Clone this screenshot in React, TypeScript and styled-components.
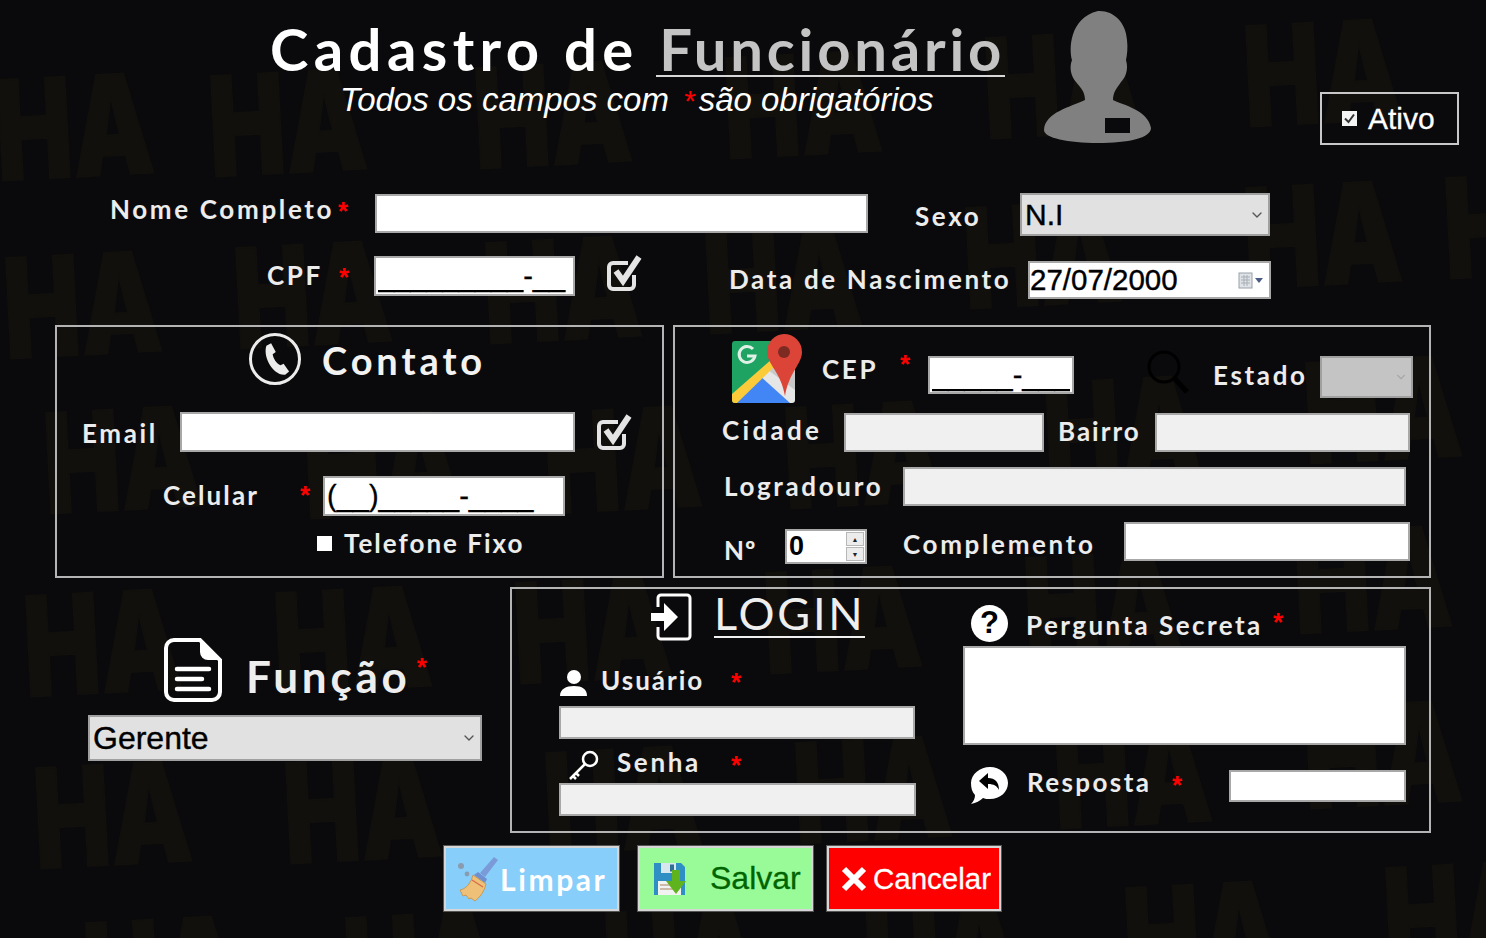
import * as React from "react";
import styled, { createGlobalStyle } from "styled-components";
import { ChevronDown } from "lucide-react";

const GlobalStyle = createGlobalStyle`
  html, body {
    margin: 0;
    padding: 0;
    background: #0a0a0c;
  }
`;

const Page = styled.div`
  position: relative;
  width: 1486px;
  height: 938px;
  overflow: hidden;
  background: #0a0a0c;
  color: #f0f0f0;
  font-family: "Lato", "Liberation Sans", sans-serif;
`;

const Watermark = styled.div`
  position: absolute;
  inset: 0;
  overflow: hidden;
`;

const WatermarkText = styled.span`
  position: absolute;
  font-family: "Inter", "Liberation Sans", sans-serif;
  font-weight: 900;
  font-size: 138px;
  line-height: 1;
  color: #12100d;
  -webkit-text-stroke: 2px #12100d;
  transform-origin: left top;
`;

const Content = styled.div`
  position: relative;
`;

const Header = styled.div`
  display: flex;
  height: 193px;
`;

const TitleBlock = styled.div`
  width: 735px;
  margin-left: 270px;
  padding-top: 14px;
`;

const Title = styled.div`
  font-size: 58px;
  line-height: 70px;
  font-weight: 700;
  letter-spacing: 5.4px;
  white-space: nowrap;
  color: #ffffff;
`;

const TitleAccent = styled.span`
  display: inline-block;
  height: 61px;
  margin-left: -2px;
  padding-left: 3px;
  letter-spacing: 3.8px;
  color: #c4c4c4;
  border-bottom: 2px solid #d8d8d8;
`;

const Subtitle = styled.div`
  margin-left: 70px;
  font-family: "Liberation Sans", sans-serif;
  font-style: italic;
  font-size: 33px;
  line-height: 32px;
  white-space: nowrap;
  color: #ffffff;
`;

const SubtitleStar = styled.span`
  color: #ff0000;
  font-size: 30px;
  margin: 0 4px 0 14px;
`;

const PersonIcon = styled.svg`
  width: 109px;
  height: 133px;
  margin: 10px 0 0 38px;
`;

const AtivoBox = styled.div`
  box-sizing: border-box;
  width: 139px;
  height: 53px;
  margin: 92px 0 0 168px;
  border: 2px solid #c8c8c8;
  display: flex;
  align-items: center;
  padding-left: 20px;
  font-family: "Liberation Sans", sans-serif;
  font-size: 30px;
  -webkit-text-stroke: 0.3px #ffffff;
  color: #ffffff;
`;

const TickBox = styled.span`
  box-sizing: border-box;
  width: 15px;
  height: 15px;
  margin-right: 11px;
  background: #f4f4f4;
  display: flex;
  align-items: center;
  justify-content: center;
`;

const Row = styled.div<{ $h: number; $pl?: number; $mt?: number; $top?: boolean }>`
  display: flex;
  align-items: ${p => (p.$top ? "flex-start" : "center")};
  height: ${p => p.$h}px;
  padding-left: ${p => p.$pl || 0}px;
  margin-top: ${p => p.$mt || 0}px;
`;

const Label = styled.span<{ $w?: number; $ml?: number; $ls?: number; $mt?: number }>`
  flex: none;
  width: ${p => (p.$w ? p.$w + "px" : "auto")};
  margin-left: ${p => p.$ml || 0}px;
  margin-top: ${p => p.$mt || 0}px;
  font-size: 26px;
  line-height: 1.2;
  font-weight: 700;
  letter-spacing: ${p => (p.$ls === undefined ? 2.65 : p.$ls)}px;
  white-space: nowrap;
  color: #ececec;
`;

const Star = styled.span<{ $w?: number; $mt?: number; $ml?: number }>`
  flex: none;
  width: ${p => (p.$w ? p.$w + "px" : "auto")};
  margin-top: ${p => (p.$mt === undefined ? -2 : p.$mt)}px;
  margin-left: ${p => p.$ml || 0}px;
  font-family: "Liberation Sans", sans-serif;
  font-size: 26px;
  font-weight: 700;
  line-height: 20px;
  height: 20px;
  color: #ff0000;
`;

const Field = styled.input<{ $w: number; $h: number; $off?: boolean; $mt?: number }>`
  flex: none;
  display: block;
  box-sizing: border-box;
  width: ${p => p.$w}px;
  height: ${p => p.$h}px;
  margin: ${p => p.$mt || 0}px 0 0 0;
  padding: 0 2px;
  border: 2px solid #a8a8a8;
  border-radius: 0;
  outline: none;
  background: ${p => (p.$off ? "#f0f0f0" : "#ffffff")};
  font-family: "Liberation Sans", sans-serif;
  font-size: 29px;
  -webkit-text-stroke: 0.3px #000000;
  color: #000000;
`;

const Memo = styled.div`
  box-sizing: border-box;
  width: 443px;
  height: 99px;
  margin-top: 5px;
  background: #ffffff;
  border: 2px solid #a8a8a8;
`;

const SelectBox = styled.div<{ $w: number; $h: number; $bg?: string; $size?: number; $mt?: number }>`
  flex: none;
  box-sizing: border-box;
  width: ${p => p.$w}px;
  height: ${p => p.$h}px;
  margin-top: ${p => p.$mt || 0}px;
  display: flex;
  align-items: center;
  justify-content: space-between;
  padding: 0 3px 0 3px;
  border: 2px solid #a0a0a0;
  background: ${p => p.$bg || "#e1e1e1"};
  font-family: "Liberation Sans", sans-serif;
  font-size: ${p => p.$size || 30}px;
  -webkit-text-stroke: 0.4px #000000;
  color: #000000;
`;

const DateBox = styled.div`
  flex: none;
  box-sizing: border-box;
  width: 243px;
  height: 38px;
  margin-top: 7px;
  display: flex;
  align-items: center;
  justify-content: space-between;
  padding: 0 5px 0 0;
  border: 2px solid #a8a8a8;
  background: #ffffff;
  font-family: "Liberation Sans", sans-serif;
  font-size: 29.5px;
  -webkit-text-stroke: 0.4px #000000;
  color: #000000;
`;

const Spin = styled.div`
  flex: none;
  box-sizing: border-box;
  width: 82px;
  height: 35px;
  margin-top: 7px;
  display: flex;
  align-items: center;
  justify-content: space-between;
  padding: 0 1px 0 2px;
  border: 2px solid #a8a8a8;
  background: #ffffff;
  font-family: "Liberation Sans", sans-serif;
  font-weight: 700;
  font-size: 27px;
  color: #000000;
`;

const SpinButtons = styled.div`
  width: 18px;
  display: flex;
  flex-direction: column;
  gap: 1px;
`;

const SpinButton = styled.div`
  height: 14px;
  display: flex;
  align-items: center;
  justify-content: center;
  background: #ececec;
  border: 1px solid #b8b8b8;
  box-sizing: border-box;
  font-size: 7px;
  line-height: 1;
  color: #222222;
`;

const Columns = styled.div`
  display: flex;
  gap: 9px;
  padding: 25px 0 0 55px;
`;

const Panel = styled.div<{ $w: number; $h: number }>`
  box-sizing: border-box;
  width: ${p => p.$w}px;
  height: ${p => p.$h}px;
  border: 2px solid #b4b4b4;
`;

const SectionTitle = styled.span`
  margin: 2px 0 0 21px;
  font-size: 38px;
  font-weight: 700;
  letter-spacing: 3.9px;
  color: #f2f2f2;
`;

const PhoneRing = styled.span`
  box-sizing: border-box;
  width: 52px;
  height: 52px;
  border: 3px solid #ececec;
  border-radius: 50%;
  display: flex;
  align-items: center;
  justify-content: center;
`;

const Square = styled.span`
  width: 15px;
  height: 15px;
  margin-right: 12px;
  background: #ffffff;
`;

const IconSvg = styled.svg<{ $w: number; $h: number; $ml?: number; $mt?: number }>`
  flex: none;
  display: block;
  width: ${p => p.$w}px;
  height: ${p => p.$h}px;
  margin-left: ${p => p.$ml || 0}px;
  margin-top: ${p => p.$mt || 0}px;
`;

const BottomRow = styled.div`
  display: flex;
  padding: 9px 0 0 88px;
`;

const FuncaoColumn = styled.div`
  width: 394px;
  margin-right: 28px;
  padding-top: 51px;
`;

const FuncaoTitle = styled.span`
  margin: 12px 0 0 24px;
  font-size: 44px;
  font-weight: 700;
  letter-spacing: 3.8px;
  color: #eeeeee;
`;

const LoginGrid = styled.div`
  display: grid;
  grid-template-columns: 451px 1fr;
`;

const LoginColumn = styled.div`
  padding-left: 47px;
`;

const LoginTitle = styled.span`
  margin: -6px 0 0 22px;
  height: 45px;
  font-size: 45px;
  line-height: 44px;
  letter-spacing: 2.8px;
  color: #eeeeee;
  border-bottom: 2px solid #f0f0f0;
`;

const QuestionMark = styled.span`
  flex: none;
  width: 37px;
  height: 37px;
  border-radius: 50%;
  background: #ffffff;
  display: flex;
  align-items: center;
  justify-content: center;
  font-family: "Liberation Sans", sans-serif;
  font-size: 31px;
  font-weight: 700;
  color: #000000;
`;

const ButtonRow = styled.div`
  display: flex;
  padding: 12px 0 0 443px;
`;

const Button = styled.div<{ $bg: string; $fg: string; $ml?: number; $w: number }>`
  box-sizing: border-box;
  width: ${p => p.$w}px;
  height: 67px;
  margin-left: ${p => p.$ml || 0}px;
  display: flex;
  align-items: center;
  border: 3px solid #d6d6d6;
  outline: 1px solid #555555;
  outline-offset: -1px;
  background: ${p => p.$bg};
  color: ${p => p.$fg};
  font-family: "Liberation Sans", sans-serif;
  white-space: nowrap;
`;

const ButtonText = styled.span<{ $ml?: number; $size?: number; $lato?: boolean }>`
  margin-left: ${p => p.$ml || 0}px;
  font-size: ${p => p.$size || 30}px;
  -webkit-text-stroke: 0.3px currentColor;
  ${p => p.$lato && `font-family: "Lato", sans-serif; font-weight: 700; letter-spacing: 2.6px; -webkit-text-stroke: 0;`}
`;

const watermarks = [
  [-8, 62], [205, 58], [470, 50], [720, 40], [980, 20], [1240, 8],
  [0, 240], [230, 230], [480, 225], [700, 215], [960, 190], [1240, 170], [1440, 160],
  [40, 395], [300, 400], [540, 395], [780, 390], [1040, 365], [1300, 345],
  [20, 578], [270, 575], [510, 565], [760, 555], [1020, 540], [1290, 515],
  [30, 750], [280, 745], [540, 735], [790, 725], [1050, 710], [1300, 690],
  [80, 905], [340, 900], [600, 895], [860, 885], [1120, 870], [1380, 850],
];

const CheckIcon = ({ ml }: { ml?: number }) => (
  <IconSvg $w={36} $h={38} $ml={ml} viewBox="0 0 36 38" fill="none">
    <path d="M27 21v10a4 4 0 0 1-4 4H6a4 4 0 0 1-4-4V13a4 4 0 0 1 4-4h15" stroke="#e4e4e4" strokeWidth="4" />
    <path d="M9 17l7 10L32 3" stroke="#e4e4e4" strokeWidth="6" />
  </IconSvg>
);

const MapsLogo = () => (
  <IconSvg $w={71} $h={69} viewBox="0 0 71 69">
    <path d="M3 7h55v62H3a3 3 0 0 1-3-3V10a3 3 0 0 1 3-3z" fill="#1ea362" />
    <path d="M40 32L63 52v14a3 3 0 0 1-3 3h-5L26 45z" fill="#e6e6e6" />
    <path d="M42 20h21v36L36 36z" fill="#c8c8c8" />
    <path d="M28 42L58 69H5z" fill="#4285f4" />
    <path d="M0 60L40 25l5 5L5 69H3a3 3 0 0 1-3-3z" fill="#fbcb3a" />
    <path d="M52 0a18 18 0 0 1 18 18c0 12-13 20-17 44C49 38 35 30 35 18A18 18 0 0 1 52 0z" fill="#db4437" />
    <circle cx="52" cy="18" r="6" fill="#7d2a22" />
    <path d="M21 15a8 8 0 1 0 2 7h-8" fill="none" stroke="#dff0e6" strokeWidth="3" />
  </IconSvg>
);

const DateIcon = () => (
  <svg width="26" height="18" viewBox="0 0 26 18">
    <rect x="1" y="2" width="13" height="15" fill="#dfe3e8" stroke="#9aa0a8" />
    <path d="M3 6h9M3 9h9M3 12h9M6 4v11M9 4v11" stroke="#a8adb5" strokeWidth="1" />
    <path d="M17 7h8l-4 5z" fill="#4b5b84" />
  </svg>
);

const Broom = () => (
  <IconSvg $w={44} $h={46} $ml={12} viewBox="0 0 44 46">
    <circle cx="3" cy="10" r="3" fill="#8a9bb0" />
    <circle cx="9" cy="18" r="2.4" fill="#8a9bb0" />
    <path d="M36 1l4 3-13 17-5-4z" fill="#7b9bd8" />
    <path d="M20 16l9 7-2 4-11-8z" fill="#6f8fd0" />
    <path d="M15 19l13 9c-2 8-6 13-11 17l-4-3-2 1-3-4-3 1-3-6c6-1 11-7 13-15z" fill="#eec078" stroke="#c99a55" strokeWidth="1" />
    <path d="M14 24l11 7" stroke="#d96a4a" strokeWidth="1.2" />
  </IconSvg>
);

const Floppy = () => (
  <IconSvg $w={33} $h={34} $ml={13} viewBox="0 0 33 34">
    <path d="M1 1h27l4 4v28H1z" fill="#2f8ec4" />
    <rect x="8" y="1" width="15" height="10" fill="#d8e6ee" />
    <rect x="17" y="2.5" width="4" height="7" fill="#2f6f96" />
    <rect x="5" y="19" width="23" height="14" fill="#f2f2f2" />
    <path d="M7 23h14M7 27h14" stroke="#c0a890" strokeWidth="1.5" />
    <path d="M19 8h8v11h6L23 32 13 19h6z" fill="#5fb41e" />
  </IconSvg>
);

export default function App() {
  return (
    <Page>
      <GlobalStyle />
      <Watermark>
        {watermarks.map(([x, y], i) => (
          <WatermarkText key={i} style={{ left: x, top: y, transform: "rotate(-3deg) scaleX(0.74)" }}>HA</WatermarkText>
        ))}
      </Watermark>

      <Content>
        <Header>
          <TitleBlock>
            <Title>Cadastro de <TitleAccent>Funcionário</TitleAccent></Title>
            <Subtitle>Todos os campos com<SubtitleStar>*</SubtitleStar>são obrigatórios</Subtitle>
          </TitleBlock>
          <PersonIcon viewBox="0 0 109 133">
            <path d="M55 1C70 0 83 12 84 30c1 8 0 15-1 20 3 10-1 18-5 22-4 6-8 10-8 18 10 5 35 10 38 28 0 10-23 15-53 15S1 128 1 120c1-18 27-23 41-30 0-8-4-12-9-18-5-6-7-14-4-22-3-10-3-42 26-49z" fill="#808080" />
            <rect x="62" y="108" width="25" height="15" fill="#0a0a0c" />
          </PersonIcon>
          <AtivoBox>
            <TickBox>
              <svg width="13" height="13" viewBox="0 0 13 13" fill="none">
                <path d="M2 6.5l3.5 3.5L11 2.5" stroke="#333333" strokeWidth="2" />
              </svg>
            </TickBox>
            Ativo
          </AtivoBox>
        </Header>

        <Row $h={43} $pl={110} $top>
          <Label $w={228} $mt={1}>Nome Completo</Label>
          <Star $w={37} $mt={8}>*</Star>
          <Field $w={493} $h={39} $mt={1} readOnly />
          <Label $w={105} $ml={47} $mt={8}>Sexo</Label>
          <SelectBox $w={250} $h={43} $size={30}>
            N.I
            <ChevronDown size={16} color="#555555" />
          </SelectBox>
        </Row>

        <Row $h={46} $pl={267} $mt={18} $top>
          <Label $w={72} $mt={6}>CPF</Label>
          <Star $w={35} $mt={13}>*</Star>
          <Field $w={201} $h={40} $mt={2} value="_________-__" readOnly />
          <CheckIcon ml={32} />
          <Label $w={299} $ml={86} $mt={10}>Data de Nascimento</Label>
          <DateBox>
            27/07/2000
            <DateIcon />
          </DateBox>
        </Row>

        <Columns>
          <Panel $w={609} $h={253}>
            <Row $h={52} $pl={192} $mt={6}>
              <PhoneRing>
                <svg width="36" height="38" viewBox="0 0 46 46">
                  <path d="M12 6l6-3 6 11-4 3c1 6 5 12 10 14l4-2 7 10-5 4c-8 1-16-6-21-15C11 20 10 12 12 6z" fill="#ececec" />
                </svg>
              </PhoneRing>
              <SectionTitle>Contato</SectionTitle>
            </Row>
            <Row $h={40} $pl={25} $mt={27}>
              <Label $w={98} $mt={4}>Email</Label>
              <Field $w={395} $h={40} readOnly />
              <CheckIcon ml={22} />
            </Row>
            <Row $h={40} $pl={106} $mt={24}>
              <Label $w={137} $ls={2.1}>Celular</Label>
              <Star $w={23}>*</Star>
              <Field $w={242} $h={40} value="(__)_____-____" readOnly />
            </Row>
            <Row $h={27} $pl={260} $mt={14}>
              <Square />
              <Label $ls={2}>Telefone Fixo</Label>
            </Row>
          </Panel>

          <Panel $w={758} $h={253}>
            <Row $h={69} $pl={57} $mt={7} $top>
              <MapsLogo />
              <Label $w={78} $ml={19} $mt={20}>CEP</Label>
              <Star $w={28} $mt={20}>*</Star>
              <Field $w={146} $h={38} $mt={22} value="_____-___" readOnly />
              <IconSvg $w={43} $h={45} $ml={73} $mt={16} viewBox="0 0 43 45" fill="none">
                <circle cx="17" cy="17" r="15" stroke="#000000" strokeWidth="3" />
                <path d="M28 29l12 13" stroke="#000000" strokeWidth="5" />
              </IconSvg>
              <Label $w={107} $ml={23} $mt={26}>Estado</Label>
              <SelectBox $w={93} $h={42} $mt={22} $bg="#c4c4c4">
                <span />
                <ChevronDown size={14} color="#a8a8a8" />
              </SelectBox>
            </Row>
            <Row $h={39} $pl={47} $mt={10}>
              <Label $w={122} $ls={3.3} $mt={-4}>Cidade</Label>
              <Field $w={200} $h={39} $off readOnly />
              <Label $w={97} $ml={14} $ls={2} $mt={-2}>Bairro</Label>
              <Field $w={255} $h={39} $off readOnly />
            </Row>
            <Row $h={39} $pl={49} $mt={15}>
              <Label $w={179}>Logradouro</Label>
              <Field $w={503} $h={39} $off readOnly />
            </Row>
            <Row $h={42} $pl={49} $mt={16} $top>
              <Label $w={61} $ls={1} $mt={13}>Nº</Label>
              <Spin>
                0
                <SpinButtons>
                  <SpinButton>▲</SpinButton>
                  <SpinButton>▼</SpinButton>
                </SpinButtons>
              </Spin>
              <Label $w={221} $ml={36} $mt={7}>Complemento</Label>
              <Field $w={286} $h={39} readOnly />
            </Row>
          </Panel>
        </Columns>

        <BottomRow>
          <FuncaoColumn>
            <Row $h={64} $pl={76}>
              <IconSvg $w={58} $h={64} viewBox="0 0 58 64" fill="none">
                <path d="M10 2h26l20 20v32a8 8 0 0 1-8 8H10a8 8 0 0 1-8-8V10a8 8 0 0 1 8-8z" stroke="#ffffff" strokeWidth="4" />
                <path d="M36 2v12a8 8 0 0 0 8 8h12z" fill="#ffffff" />
                <path d="M13 31h32M13 41h25M13 51h32" stroke="#ffffff" strokeWidth="4.5" strokeLinecap="round" />
              </IconSvg>
              <FuncaoTitle>Função</FuncaoTitle>
              <Star $mt={-6} $ml={6}>*</Star>
            </Row>
            <Row $h={46} $mt={13}>
              <SelectBox $w={394} $h={46} $size={32}>
                Gerente
                <ChevronDown size={16} color="#555555" />
              </SelectBox>
            </Row>
          </FuncaoColumn>

          <Panel $w={921} $h={246}>
            <LoginGrid>
              <LoginColumn>
                <Row $h={48} $pl={91} $mt={4}>
                  <IconSvg $w={42} $h={48} viewBox="0 0 42 48" fill="none">
                    <path d="M8 14V5a3 3 0 0 1 3-3h26a3 3 0 0 1 3 3v38a3 3 0 0 1-3 3H11a3 3 0 0 1-3-3v-9" stroke="#ffffff" strokeWidth="3" />
                    <path d="M1 20h13v-10l14 14-14 14V28H1z" fill="#ffffff" />
                  </IconSvg>
                  <LoginTitle>LOGIN</LoginTitle>
                </Row>
                <Row $h={26} $pl={1} $mt={29}>
                  <IconSvg $w={27} $h={26} viewBox="0 0 27 26">
                    <circle cx="14" cy="7" r="7" fill="#ffffff" />
                    <path d="M0 26c0-7 6-10 14-10s13 3 13 10z" fill="#ffffff" />
                  </IconSvg>
                  <Label $w={130} $ml={14} $ls={2} $mt={-4}>Usuário</Label>
                  <Star>*</Star>
                </Row>
                <Field $w={356} $h={33} $mt={10} $off readOnly />
                <Row $h={31} $pl={8} $mt={11}>
                  <IconSvg $w={32} $h={31} viewBox="0 0 32 31" fill="none">
                    <circle cx="23" cy="9" r="7" stroke="#ffffff" strokeWidth="2.5" />
                    <path d="M18 14L3 29M6 26l3 3M9 23l3 3" stroke="#ffffff" strokeWidth="2.5" />
                  </IconSvg>
                  <Label $w={114} $ml={18} $mt={-6}>Senha</Label>
                  <Star>*</Star>
                </Row>
                <Field $w={357} $h={33} $mt={2} $off readOnly />
              </LoginColumn>

              <div>
                <Row $h={36} $pl={8} $mt={16}>
                  <QuestionMark>?</QuestionMark>
                  <Label $w={247} $ml={18} $ls={2.45} $mt={6}>Pergunta Secreta</Label>
                  <Star>*</Star>
                </Row>
                <Memo />
                <Row $h={39} $pl={7} $mt={21}>
                  <IconSvg $w={39} $h={39} viewBox="0 0 39 39">
                    <path d="M20 1c10 0 18 7 18 16s-8 16-18 16c-3 0-5 0-7-1-3 3-7 5-12 6 3-3 4-6 4-9C2 26 1 22 1 17 1 8 10 1 20 1z" fill="#ffffff" />
                    <path d="M9 15l9-8v5c7 0 11 4 11 12-2-4-5-6-11-6v5z" fill="#000000" />
                  </IconSvg>
                  <Label $w={145} $ml={18} $ls={2.4} $mt={-6}>Resposta</Label>
                  <Star $w={57}>*</Star>
                  <Field $w={177} $h={32} readOnly />
                </Row>
              </div>
            </LoginGrid>
          </Panel>
        </BottomRow>

        <ButtonRow>
          <Button $w={177} $bg="#87cefa" $fg="#ffffff">
            <Broom />
            <ButtonText $ml={-2} $lato>Limpar</ButtonText>
          </Button>
          <Button $w={177} $ml={17} $bg="#98fb98" $fg="#006400">
            <Floppy />
            <ButtonText $ml={24} $size={32}>Salvar</ButtonText>
          </Button>
          <Button $w={176} $ml={12} $bg="#ff0000" $fg="#ffffff">
            <IconSvg $w={26} $h={26} $ml={12} viewBox="0 0 26 26">
              <path d="M3 3l20 20M23 3L3 23" stroke="#ffffff" strokeWidth="6" />
            </IconSvg>
            <ButtonText $ml={6} $size={29.5}>Cancelar</ButtonText>
          </Button>
        </ButtonRow>
      </Content>
    </Page>
  );
}
